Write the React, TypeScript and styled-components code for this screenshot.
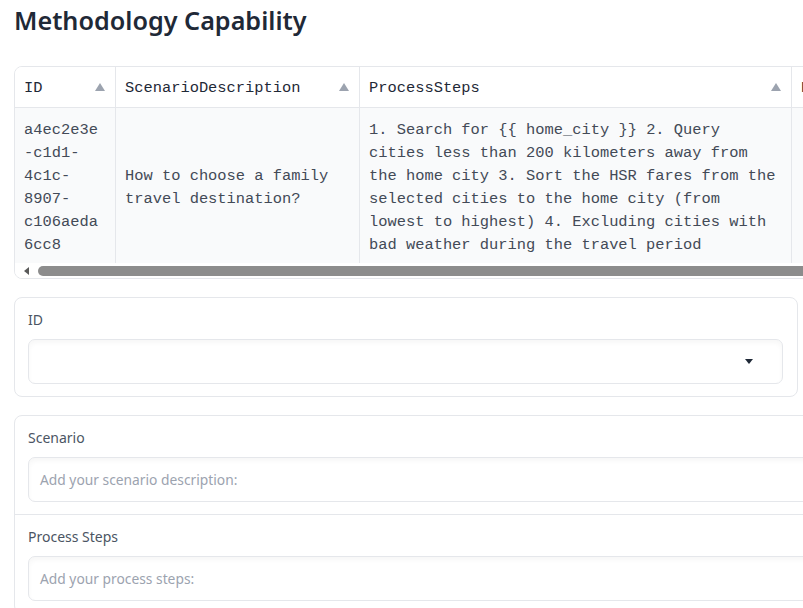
import React from 'react';
import styled, { createGlobalStyle } from 'styled-components';

const Global = createGlobalStyle`
  html, body { margin: 0; padding: 0; background: #ffffff; overflow: hidden; }
  body { font-family: "Noto Sans", "Open Sans", sans-serif; color: #1f2937; }
`;

const Page = styled.div`
  display: flex;
  flex-direction: column;
  align-items: flex-start;
  gap: 18px;
  padding: 0 0 0 14px;
  width: 1200px;
`;

const Title = styled.h1`
  margin: 5px 0 12px;
  font-size: 25.2px;
  line-height: 31px;
  font-weight: 600;
  color: #1f2937;
`;

const TableFrame = styled.div`
  width: 1100px;
  border: 1px solid #e5e7eb;
  border-radius: 8px;
  overflow: hidden;
  background: #ffffff;
`;

const Row = styled.div<{ $head?: boolean }>`
  display: grid;
  grid-template-columns: 101px 244px 432px 320px;
  border-bottom: ${(p) => (p.$head ? '1px solid #e5e7eb' : 'none')};
  background: ${(p) => (p.$head ? '#ffffff' : '#f9fafb')};
`;

const HeadCell = styled.div`
  display: flex;
  align-items: center;
  justify-content: space-between;
  height: 40px;
  padding: 2px 10px 0 9px;
  border-right: 1px solid #e5e7eb;
  font-family: "Liberation Mono", "DejaVu Sans Mono", monospace;
  font-size: 15.4px;
  color: #1f2937;
  box-sizing: border-box;
`;

const SortArrow = styled.span`
  width: 0;
  height: 0;
  border-left: 5px solid transparent;
  border-right: 5px solid transparent;
  border-bottom: 8px solid #9ca3af;
  margin-top: -2px;
`;

const BodyCell = styled.div<{ $middle?: boolean }>`
  display: flex;
  flex-direction: column;
  justify-content: ${(p) => (p.$middle ? 'center' : 'flex-start')};
  padding: 11px 11px 6px 9px;
  border-right: 1px solid #e5e7eb;
  font-family: "Liberation Mono", "DejaVu Sans Mono", monospace;
  font-size: 15.4px;
  line-height: 23px;
  color: #434a57;
  overflow-wrap: anywhere;
  box-sizing: border-box;
`;

const ScrollTrack = styled.div`
  display: flex;
  align-items: center;
  gap: 9px;
  height: 15px;
  padding: 1px 0 0 9px;
  box-sizing: border-box;
  background: #ffffff;
`;

const ScrollArrow = styled.span`
  width: 0;
  height: 0;
  border-top: 4px solid transparent;
  border-bottom: 4px solid transparent;
  border-right: 5px solid #5a5a5a;
`;

const ScrollThumb = styled.div`
  flex: 1;
  height: 10px;
  border-radius: 5px;
  background: #8c8c8c;
`;

const Panel = styled.div<{ $width: number }>`
  width: ${(p) => p.$width}px;
  border: 1px solid #e5e7eb;
  border-radius: 8px;
  background: #ffffff;
  box-sizing: border-box;
  display: flex;
  flex-direction: column;
`;

const Field = styled.div<{ $divided?: boolean }>`
  display: flex;
  flex-direction: column;
  padding: 12px 14px 12px 13px;
  border-top: ${(p) => (p.$divided ? '1px solid #e5e7eb' : 'none')};
`;

const Label = styled.label`
  font-size: 14px;
  line-height: 20px;
  color: #4b5563;
  margin-bottom: 9px;
`;

const InputBox = styled.div`
  position: relative;
  height: 45px;
  border: 1px solid #e5e7eb;
  border-radius: 7px;
  box-shadow: inset 0 3px 5px rgba(0, 0, 0, 0.035);
  background: #ffffff;
  display: flex;
  align-items: center;
  padding: 0 12px 0 11px;
  box-sizing: border-box;
  font-size: 13.8px;
  color: #9ca3af;
`;

const Caret = styled.span`
  margin-left: auto;
  margin-right: 17px;
  width: 0;
  height: 0;
  border-left: 4px solid transparent;
  border-right: 4px solid transparent;
  border-top: 5px solid #1f2937;
`;

export default function App() {
  return (
    <>
      <Global />
      <Page>
        <Title>Methodology Capability</Title>
        <TableFrame>
          <Row $head>
            <HeadCell>ID<SortArrow /></HeadCell>
            <HeadCell>ScenarioDescription<SortArrow /></HeadCell>
            <HeadCell>ProcessSteps<SortArrow /></HeadCell>
            <HeadCell>Parameters<SortArrow /></HeadCell>
          </Row>
          <Row>
            <BodyCell>a4ec2e3e-c1d1-4c1c-8907-c106aeda6cc8</BodyCell>
            <BodyCell $middle>How to choose a family travel destination?</BodyCell>
            <BodyCell>
              1. Search for {'{{'} home_city {'}}'} 2. Query cities less than 200 kilometers away from the home city 3. Sort the HSR fares from the selected cities to the home city (from lowest to highest) 4. Excluding cities with bad weather during the travel period
            </BodyCell>
            <BodyCell />
          </Row>
          <ScrollTrack>
            <ScrollArrow />
            <ScrollThumb />
          </ScrollTrack>
        </TableFrame>
        <Panel $width={784}>
          <Field>
            <Label>ID</Label>
            <InputBox>
              <Caret />
            </InputBox>
          </Field>
        </Panel>
        <Panel $width={1100}>
          <Field>
            <Label>Scenario</Label>
            <InputBox>Add your scenario description:</InputBox>
          </Field>
          <Field $divided>
            <Label>Process Steps</Label>
            <InputBox>Add your process steps:</InputBox>
          </Field>
        </Panel>
      </Page>
    </>
  );
}
